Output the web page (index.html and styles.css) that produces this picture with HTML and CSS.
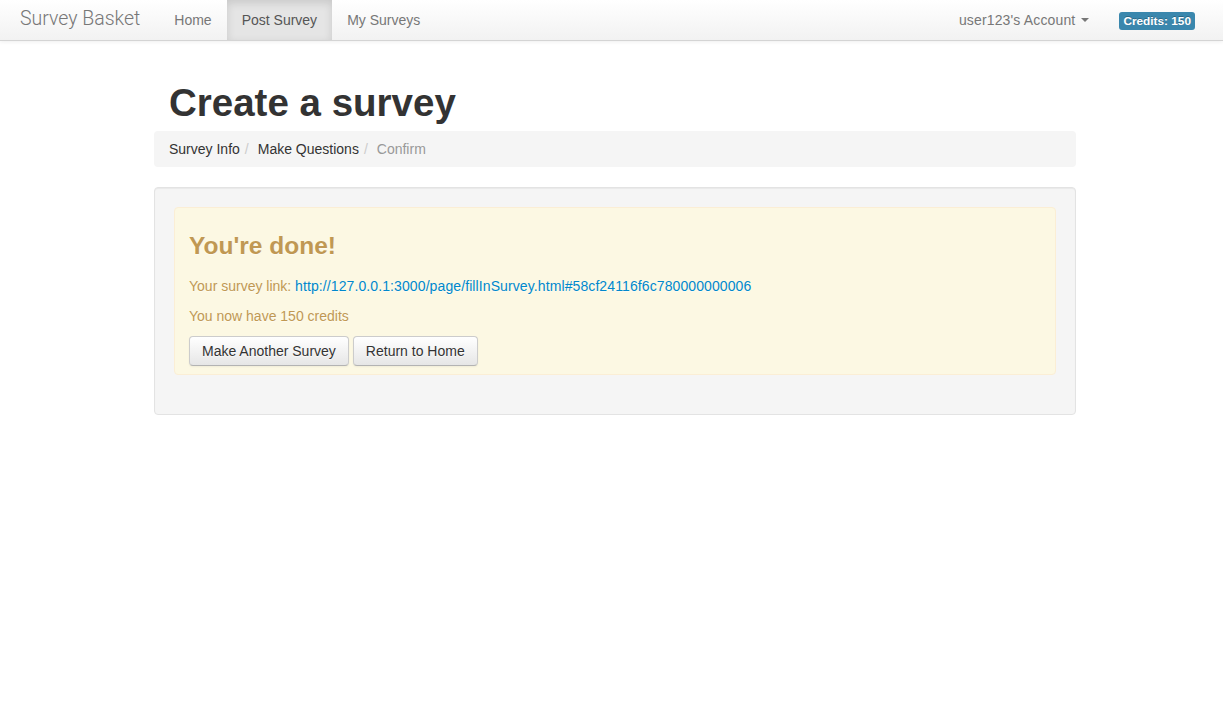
FILE: index.html
```html
<!DOCTYPE html>
<html>
<head>
<meta charset="utf-8">
<title>Survey Basket</title>
<link rel="stylesheet" href="styles.css">
</head>
<body>
<div class="navbar">
  <a class="brand" href="#">Survey Basket</a>
  <ul class="nav">
    <li><a href="#">Home</a></li>
    <li class="active"><a href="#">Post Survey</a></li>
    <li><a href="#">My Surveys</a></li>
  </ul>
  <ul class="nav nav-right">
    <li><a class="account" href="#">user123's Account <b class="caret"></b></a></li>
    <li class="credits"><span class="label">Credits: 150</span></li>
  </ul>
</div>
<div class="page">
  <div class="container">
    <h1 class="title">Create a survey</h1>
    <ul class="breadcrumb">
      <li><a href="#">Survey Info</a><span class="divider">/</span></li>
      <li><a href="#">Make Questions</a><span class="divider">/</span></li>
      <li class="current">Confirm</li>
    </ul>
    <div class="well">
      <div class="alert">
        <h3>You're done!</h3>
        <p>Your survey link: <a href="#">http://127.0.0.1:3000/page/fillInSurvey.html#58cf24116f6c780000000006</a></p>
        <p>You now have 150 credits</p>
        <div class="actions">
          <button class="btn">Make Another Survey</button>
          <button class="btn">Return to Home</button>
        </div>
      </div>
    </div>
  </div>
</div>
</body>
</html>
```
FILE: styles.css
```css
* { box-sizing: border-box; }
html, body {
  margin: 0;
  padding: 0;
  background: #ffffff;
  font-family: "Liberation Sans", Arial, sans-serif;
  font-size: 14px;
  line-height: 20px;
  color: #333333;
}
a { text-decoration: none; }

.navbar {
  display: flex;
  align-items: stretch;
  height: 41px;
  padding: 0 20px;
  background: linear-gradient(to bottom, #ffffff, #f2f2f2);
  border-bottom: 1px solid #d4d4d4;
  box-shadow: 0 1px 4px rgba(0,0,0,0.065);
}
.brand {
  display: block;
  padding: 9px 19px 11px 0;
  font-family: Roboto, "Liberation Sans", sans-serif;
  font-weight: 300;
  font-size: 19.5px;
  line-height: 20px;
  color: #777777;
}
.nav {
  display: flex;
  list-style: none;
  margin: 0;
  padding: 0;
}
.nav li { display: flex; align-items: stretch; }
.nav a {
  display: block;
  padding: 10px 15px 10px;
  color: #777777;
  line-height: 20px;
}
.nav .account { letter-spacing: 0.15px; padding-left: 13px; }
.nav .active a {
  background: #e5e5e5;
  color: #555555;
  box-shadow: inset 0 3px 8px rgba(0,0,0,0.125);
}
.nav-right { margin-left: auto; }
.caret {
  display: inline-block;
  width: 0;
  height: 0;
  vertical-align: top;
  margin-top: 8px;
  margin-left: 2px;
  border-top: 4px solid #777777;
  border-left: 4px solid transparent;
  border-right: 4px solid transparent;
}
.credits {
  align-items: center !important;
  padding: 0 8px 0 15px;
}
.label {
  display: inline-block;
  padding: 2px 4px;
  font-size: 11.8px;
  font-weight: bold;
  line-height: 14px;
  color: #ffffff;
  background: #3a87ad;
  border-radius: 3px;
  text-shadow: 0 -1px 0 rgba(0,0,0,0.25);
  margin-top: 1px;
}

.page { padding-left: 7px; }
.container {
  width: 922px;
  margin: 0 auto;
}
.title {
  margin: 42px 0 8px;
  padding-left: 15px;
  font-size: 38.5px;
  line-height: 40px;
  font-weight: bold;
  color: #333333;
}
.breadcrumb {
  list-style: none;
  margin: 0 0 20px;
  padding: 8px 15px;
  background: #f5f5f5;
  border-radius: 4px;
  display: flex;
}
.breadcrumb li { color: #999999; }
.breadcrumb a { color: #333333; }
.breadcrumb .divider { color: #cccccc; padding: 0 9px 0 5px; }

.well {
  padding: 19px;
  background: #f5f5f5;
  border: 1px solid #e3e3e3;
  border-radius: 4px;
  box-shadow: inset 0 1px 1px rgba(0,0,0,0.05);
  min-height: 20px;
}
.alert {
  margin-bottom: 20px;
  padding: 8px 35px 8px 14px;
  background: #fcf8e3;
  border: 1px solid #fbeed5;
  border-radius: 4px;
  color: #c09853;
  text-shadow: 0 1px 0 rgba(255,255,255,0.5);
}
.alert h3 {
  margin: 10px 0;
  font-size: 24.5px;
  line-height: 40px;
  font-weight: bold;
}
.alert p { margin: 0 0 10px; }
.alert a { color: #0088cc; letter-spacing: 0.1px; }
.actions { display: flex; gap: 4px; }
.btn {
  display: inline-block;
  padding: 4px 12px;
  font-family: "Liberation Sans", Arial, sans-serif;
  font-size: 14px;
  line-height: 20px;
  color: #333333;
  text-shadow: 0 1px 1px rgba(255,255,255,0.75);
  background: linear-gradient(to bottom, #ffffff, #e6e6e6);
  border: 1px solid #cccccc;
  border-bottom-color: #b3b3b3;
  border-radius: 4px;
  box-shadow: inset 0 1px 0 rgba(255,255,255,0.2), 0 1px 2px rgba(0,0,0,0.05);
  cursor: pointer;
}
```
